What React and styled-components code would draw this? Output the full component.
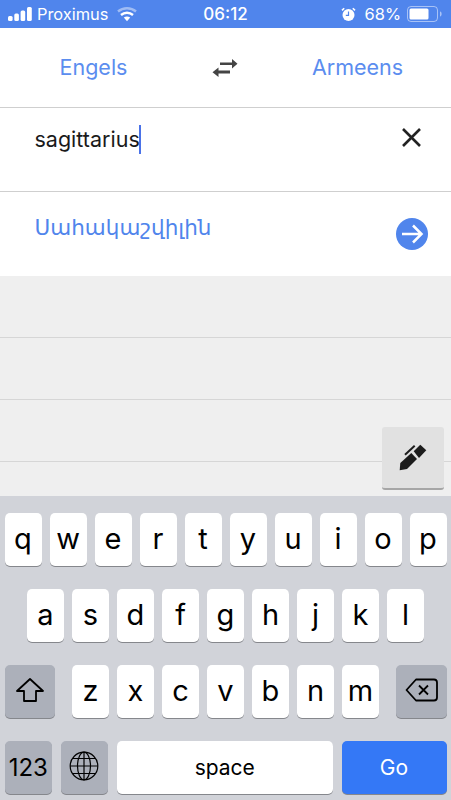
import React from "react";
import styled, { createGlobalStyle } from "styled-components";

const GlobalStyle = createGlobalStyle`
  html, body {
    margin: 0;
    padding: 0;
    background: #fff;
  }
  body {
    font-family: Inter, "Liberation Sans", sans-serif;
  }
`;

const Screen = styled.div`
  width: 451px;
  height: 800px;
  display: flex;
  flex-direction: column;
  overflow: hidden;
`;

const StatusBar = styled.div`
  height: 28px;
  background: #5085ec;
  color: #fff;
  display: grid;
  grid-template-columns: 1fr auto 1fr;
  align-items: center;
  font-size: 16.4px;
  padding: 0 8px;
  flex: none;
`;

const StatusLeft = styled.div`
  display: flex;
  align-items: center;
  gap: 5px;
`;

const StatusRight = styled.div`
  display: flex;
  align-items: center;
  justify-content: flex-end;
  gap: 5px;
`;

const Clock = styled.span`
  font-size: 17px;
  font-weight: 500;
`;

const LanguageBar = styled.div`
  height: 80px;
  flex: none;
  box-sizing: border-box;
  display: grid;
  grid-template-columns: 187px 77px 187px;
  align-items: center;
  border-bottom: 1px solid #cfcfcf;
`;

const Language = styled.div`
  text-align: center;
  color: #5b8def;
  font-size: 21.5px;
  padding-bottom: 2px;
`;

const SwapIcon = styled.svg`
  justify-self: center;
  margin-left: -2px;
`;

const InputArea = styled.div`
  height: 84px;
  flex: none;
  box-sizing: border-box;
  border-bottom: 1px solid #cfcfcf;
  padding: 15px 30px 0 34.5px;
  display: flex;
  align-items: flex-start;
  justify-content: space-between;
`;

const InputText = styled.div`
  display: flex;
  align-items: center;
  height: 32px;
  font-size: 21.5px;
  color: #1a1a1a;
`;

const Caret = styled.span`
  width: 2px;
  height: 29px;
  background: #4a72e8;
  margin-left: -1px;
`;

const ClearIcon = styled.svg`
  margin-top: 5px;
`;

const Result = styled.div`
  height: 84px;
  flex: none;
  box-sizing: border-box;
  padding: 23px 23px 0 34.5px;
  display: flex;
  justify-content: space-between;
`;

const ResultText = styled.div`
  color: #5085ec;
  font-family: "DejaVu Sans", sans-serif;
  font-size: 21.5px;
  line-height: 26px;
`;

const GoIcon = styled.svg`
  margin-top: 3px;
`;

const History = styled.div`
  position: relative;
  height: 220px;
  flex: none;
  background: #efefef;
  padding-top: 61px;
  box-sizing: border-box;
`;

const HistoryLine = styled.div`
  height: 62px;
  box-sizing: border-box;
  border-top: 1px solid #d6d6d6;
`;

const PenButton = styled.div`
  position: absolute;
  right: 7px;
  bottom: 6px;
  width: 62px;
  height: 63px;
  box-sizing: border-box;
  background: #e1e1e1;
  border-bottom: 2px solid #a6a6a6;
  border-radius: 3px;
  display: flex;
  align-items: center;
  justify-content: center;
`;

const Keyboard = styled.div`
  flex: 1;
  background: #d1d3d9;
  padding: 17px 4.5px 0;
  display: flex;
  flex-direction: column;
  gap: 23px;
`;

const KeyRow = styled.div`
  display: flex;
  justify-content: ${(p) => p.$justify || "center"};
  gap: ${(p) => p.$gap || 8}px;
`;

const Key = styled.div`
  width: ${(p) => p.$width || 37}px;
  ${(p) => p.$grow && "flex: 1;"}
  height: 53px;
  flex-shrink: 0;
  border-radius: 5px;
  background: ${(p) => (p.$tone === "dark" ? "#acb0ba" : p.$tone === "go" ? "#3478f6" : "#fff")};
  color: ${(p) => (p.$tone === "go" ? "#fff" : "#000")};
  box-shadow: 0 1px 0 #85878c;
  display: flex;
  align-items: center;
  justify-content: center;
  font-size: ${(p) => p.$size || 29}px;
  padding-bottom: ${(p) => p.$lift || 3}px;
  box-sizing: border-box;
`;

const Letters = styled.div`
  display: flex;
  gap: 8px;
`;

const rows = ["qwertyuiop", "asdfghjkl"];

export default function App() {
  return (
    <Screen>
      <GlobalStyle />
      <StatusBar>
        <StatusLeft>
          <svg width="24" height="14" viewBox="0 0 24 14" fill="#fff">
            <rect x="0" y="9" width="4.600" height="5" rx="1.500" />
            <rect x="6.300" y="6.500" width="4.600" height="7.500" rx="1.500" />
            <rect x="12.600" y="3.500" width="4.600" height="10.500" rx="1.500" />
            <rect x="19" y="0" width="4.800" height="14" rx="1.500" />
          </svg>
          <span>Proximus</span>
          <svg width="20" height="15" viewBox="0 0 20 15" style={{ marginLeft: 4 }}>
            <path d="M1 4.500C6 .2 14 .2 19 4.500" fill="none" stroke="#fff" strokeOpacity="0.45" strokeWidth="2.400" />
            <path d="M4 8C7.500 5 12.500 5 16 8" fill="none" stroke="#fff" strokeWidth="2.400" />
            <path d="M6.800 10.600C8.800 9.200 11.200 9.200 13.200 10.600L10 14.200Z" fill="#fff" />
          </svg>
        </StatusLeft>
        <Clock>06:12</Clock>
        <StatusRight>
          <svg width="15" height="15" viewBox="0 0 15 15">
            <circle cx="7.500" cy="8" r="6" fill="#fff" />
            <path d="M7.500 4.500V8.400H4.800" fill="none" stroke="#5085ec" strokeWidth="1.200" />
            <path d="M1 3.400 3.200 1.200M14 3.400 11.800 1.200" stroke="#fff" strokeWidth="1.600" />
          </svg>
          <span style={{ marginLeft: 4 }}>68%</span>
          <svg width="36" height="16" viewBox="0 0 36 16" style={{ marginLeft: 1 }}>
            <rect x="0.500" y="0.500" width="30" height="15" rx="3.500" fill="none" stroke="#fff" strokeOpacity="0.5" />
            <rect x="2.500" y="2.500" width="19" height="11" rx="1.500" fill="#fff" />
            <path d="M33 5.500c1.200.3 1.600 1.200 1.600 2.500s-.4 2.200-1.600 2.500z" fill="#fff" fillOpacity="0.5" />
          </svg>
        </StatusRight>
      </StatusBar>

      <LanguageBar>
        <Language>Engels</Language>
        <SwapIcon width="26" height="20" viewBox="0 0 26 20" fill="#444">
          <path d="M8 4.500H20V1L25.500 5.800 20 10.500V7H8Z" />
          <path d="M18 12.500H6.500V9.500L.5 14.300 6.500 19V15.500H18Z" />
        </SwapIcon>
        <Language>Armeens</Language>
      </LanguageBar>

      <InputArea>
        <InputText>
          sagittarius
          <Caret />
        </InputText>
        <ClearIcon width="19" height="19" viewBox="0 0 19 19">
          <path d="M1 1 18 18M18 1 1 18" stroke="#222" strokeWidth="2.600" />
        </ClearIcon>
      </InputArea>

      <Result>
        <ResultText>Սահակաշվիլին</ResultText>
        <GoIcon width="32" height="32" viewBox="0 0 32 32">
          <circle cx="16" cy="16" r="16" fill="#5085ec" />
          <path d="M6 16H25M17 7.500 25.500 16 17 24.500" fill="none" stroke="#fff" strokeWidth="2.500" />
        </GoIcon>
      </Result>

      <History>
        <HistoryLine />
        <HistoryLine />
        <HistoryLine />
        <PenButton>
          <svg width="30" height="30" viewBox="0 0 30 30" fill="#1c1c1c">
            <path d="M1.700 27.300 2.300 20 13.300 10 19 16 9 26Z" />
            <path d="M15.700 8.300 22.300 1.700 28.300 7.300 21 15Z" />
            <path d="M7 11.700 16.700 2.700" fill="none" stroke="#1c1c1c" strokeWidth="2" />
          </svg>
        </PenButton>
      </History>

      <Keyboard>
        {rows.map((row) => (
          <KeyRow key={row}>
            {row.split("").map((c) => (
              <Key key={c}>{c}</Key>
            ))}
          </KeyRow>
        ))}
        <KeyRow $justify="space-between">
          <Key $width={50.500} $tone="dark">
            <svg width="28" height="26" viewBox="0 0 28 26" fill="none" stroke="#000" strokeWidth="1.800">
              <path d="M14 2 27 14H20V24H8V14H1Z" strokeLinejoin="round" />
            </svg>
          </Key>
          <Letters>
            {"zxcvbnm".split("").map((c) => (
              <Key key={c}>{c}</Key>
            ))}
          </Letters>
          <Key $width={50.500} $tone="dark">
            <svg width="33" height="24" viewBox="0 0 33 24" fill="none" stroke="#000" strokeWidth="1.800">
              <path d="M11 1.500H29C31 1.500 32 2.500 32 4.500V19.500C32 21.500 31 22.500 29 22.500H11L1.500 12Z" strokeLinejoin="round" />
              <path d="M14 7.500 23 16.500M23 7.500 14 16.500" />
            </svg>
          </Key>
        </KeyRow>
        <KeyRow $gap={8.500}>
          <Key $width={47.500} $tone="dark" $size={24} $lift={1}>123</Key>
          <Key $width={47.500} $tone="dark">
            <svg width="30" height="30" viewBox="0 0 30 30" fill="none" stroke="#000" strokeWidth="1.200">
              <circle cx="15" cy="15" r="13.800" />
              <ellipse cx="15" cy="15" rx="6.500" ry="13.800" />
              <path d="M15 1.200V28.800M1.200 15H28.800M3.500 7.500H26.500M3.500 22.500H26.500" />
            </svg>
          </Key>
          <Key $grow $size={21} $lift={1}>space</Key>
          <Key $width={105} $tone="go" $size={21} $lift={1}>Go</Key>
        </KeyRow>
      </Keyboard>
    </Screen>
  );
}
